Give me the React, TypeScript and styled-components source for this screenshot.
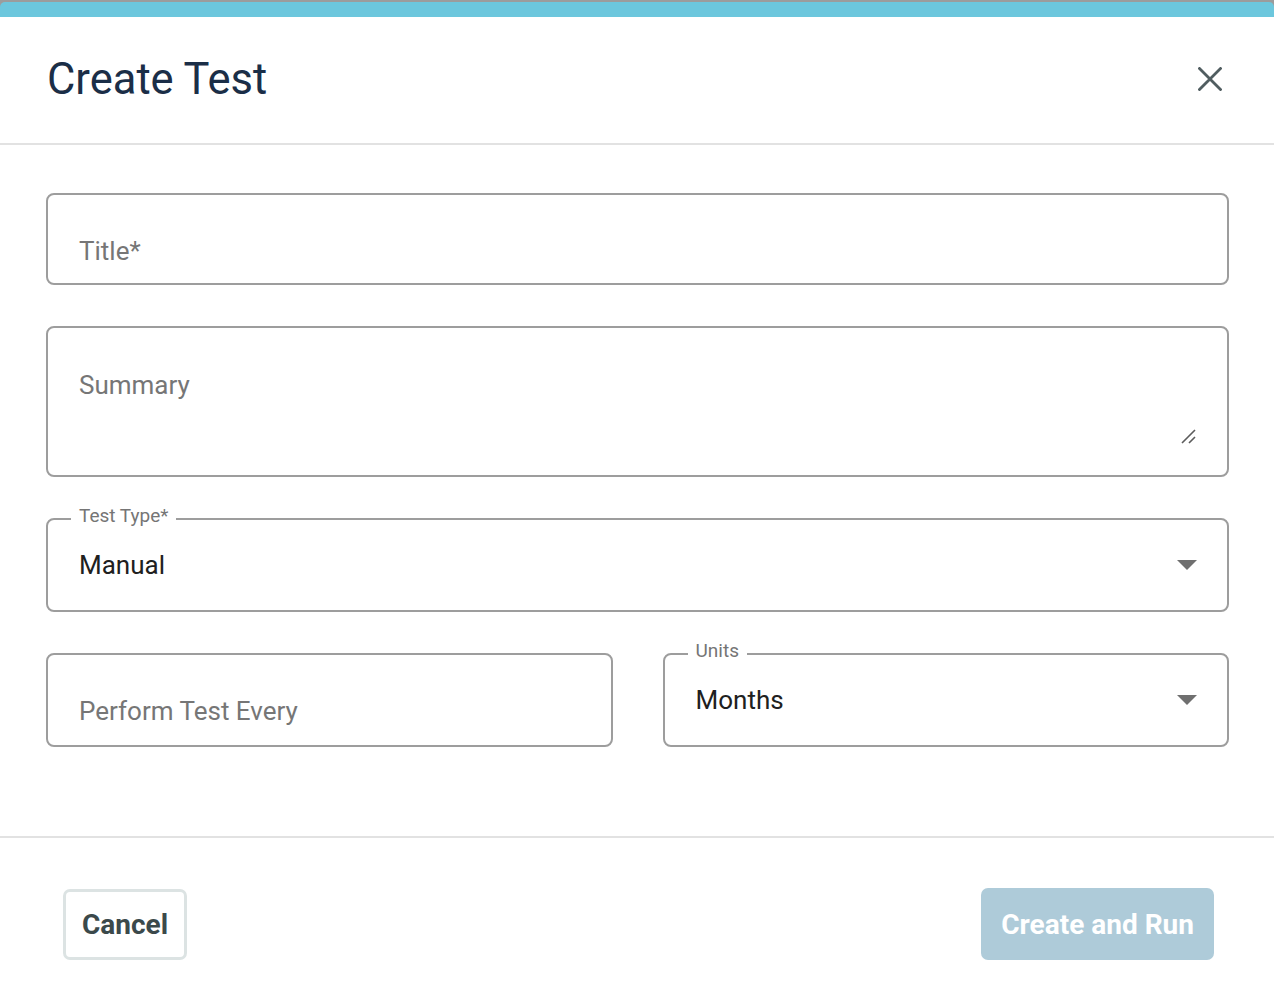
import React from "react";
import styled, { createGlobalStyle } from "styled-components";

const GlobalStyle = createGlobalStyle`
  html, body {
    margin: 0;
    padding: 0;
    background: #ffffff;
    font-family: Roboto, "Liberation Sans", Arial, sans-serif;
  }
`;

// Styled components
const Dialog = styled.div`
  width: 1274px;
  min-height: 1004px;
  background: #ffffff;
  display: flex;
  flex-direction: column;
`;

const TopEdge = styled.div`
  height: 17px;
  background: #9c9c9c;
  padding-top: 2px;
  box-sizing: border-box;
`;

const AccentBar = styled.div`
  height: 15px;
  background: #6cc7dd;
  border-radius: 5px 5px 0 0;
`;

const Header = styled.div`
  box-sizing: border-box;
  height: 128px;
  display: flex;
  align-items: center;
  justify-content: space-between;
  padding: 0 52px 2px 47px;
  border-bottom: 2px solid #e2e2e2;
`;

const Title = styled.h2`
  margin: 0;
  font-size: 43.5px;
  font-weight: 400;
  color: #1b2e47;
`;

const CloseButton = styled.button`
  background: transparent;
  border: 0;
  padding: 0;
  margin: 0;
  width: 24px;
  height: 24px;
  display: flex;
  align-items: center;
  justify-content: center;
  cursor: pointer;
  color: #505d60;
`;

const Body = styled.div`
  display: flex;
  flex-direction: column;
  gap: 41px;
  padding: 48px 45px 89px 46px;
  border-bottom: 2px solid #e2e2e2;
`;

const Row = styled.div`
  display: grid;
  grid-template-columns: 1fr 1fr;
  gap: 50px;
`;

const Field = styled.div<{ $height: number; $top?: boolean }>`
  position: relative;
  box-sizing: border-box;
  height: ${(p) => p.$height}px;
  border: 2px solid #9d9d9d;
  border-radius: 8px;
  display: flex;
  align-items: ${(p) => (p.$top ? "flex-start" : "center")};
  padding: 0 30px 0 31px;
`;

const Placeholder = styled.span<{ $offset: number }>`
  font-size: 26px;
  line-height: 30px;
  color: #767676;
  margin-top: ${(p) => p.$offset}px;
`;

const Value = styled.span`
  font-size: 26px;
  line-height: 30px;
  color: #202020;
  flex: 1;
`;

const Notch = styled.span`
  position: absolute;
  top: -16px;
  left: 23px;
  padding: 0 8px;
  background: #ffffff;
  font-size: 19px;
  line-height: 24px;
  color: #757575;
`;

const Arrow = styled.span`
  width: 0;
  height: 0;
  border-left: 10px solid transparent;
  border-right: 10px solid transparent;
  border-top: 10px solid #6f6f6f;
`;

const ResizeGrip = styled.svg`
  position: absolute;
  right: 30px;
  bottom: 30px;
  width: 17px;
  height: 17px;
`;

const Footer = styled.div`
  display: flex;
  align-items: center;
  justify-content: space-between;
  padding: 50px 60px 0 63px;
`;

const CancelButton = styled.button`
  height: 71px;
  padding: 0 16px;
  background: #ffffff;
  border: 3px solid #dce3e3;
  border-radius: 7px;
  font-family: Roboto, "Liberation Sans", Arial, sans-serif;
  font-size: 28px;
  font-weight: 700;
  color: #3b494b;
  cursor: pointer;
`;

const PrimaryButton = styled.button`
  height: 72px;
  padding: 0 20px;
  background: #aecbd9;
  border: 0;
  border-radius: 7px;
  font-family: Roboto, "Liberation Sans", Arial, sans-serif;
  font-size: 28px;
  font-weight: 700;
  color: #ffffff;
  cursor: default;
`;

const CloseIcon = () => (
  <svg width="24" height="24" viewBox="0 0 24 24" fill="none">
    <path d="M1.5 1.5L22.5 22.5M22.5 1.5L1.5 22.5" stroke="currentColor" strokeWidth="2.8" strokeLinecap="square" />
  </svg>
);

export default function App() {
  return (
    <>
      <GlobalStyle />
      <Dialog>
        <TopEdge>
          <AccentBar />
        </TopEdge>
        <Header>
          <Title>Create Test</Title>
          <CloseButton aria-label="Close">
            <CloseIcon />
          </CloseButton>
        </Header>
        <Body>
          <Field $height={92}>
            <Placeholder $offset={23}>Title*</Placeholder>
          </Field>
          <Field $height={151} $top>
            <Placeholder $offset={42}>Summary</Placeholder>
            <ResizeGrip viewBox="0 0 17 17">
              <path d="M2 15L15 2M9 15L15 9" stroke="#5c5c5c" strokeWidth="1.6" />
            </ResizeGrip>
          </Field>
          <Field $height={94}>
            <Notch>Test Type*</Notch>
            <Value>Manual</Value>
            <Arrow />
          </Field>
          <Row>
            <Field $height={94}>
              <Placeholder $offset={22}>Perform Test Every</Placeholder>
            </Field>
            <Field $height={94}>
              <Notch>Units</Notch>
              <Value>Months</Value>
              <Arrow />
            </Field>
          </Row>
        </Body>
        <Footer>
          <CancelButton>Cancel</CancelButton>
          <PrimaryButton>Create and Run</PrimaryButton>
        </Footer>
      </Dialog>
    </>
  );
}
